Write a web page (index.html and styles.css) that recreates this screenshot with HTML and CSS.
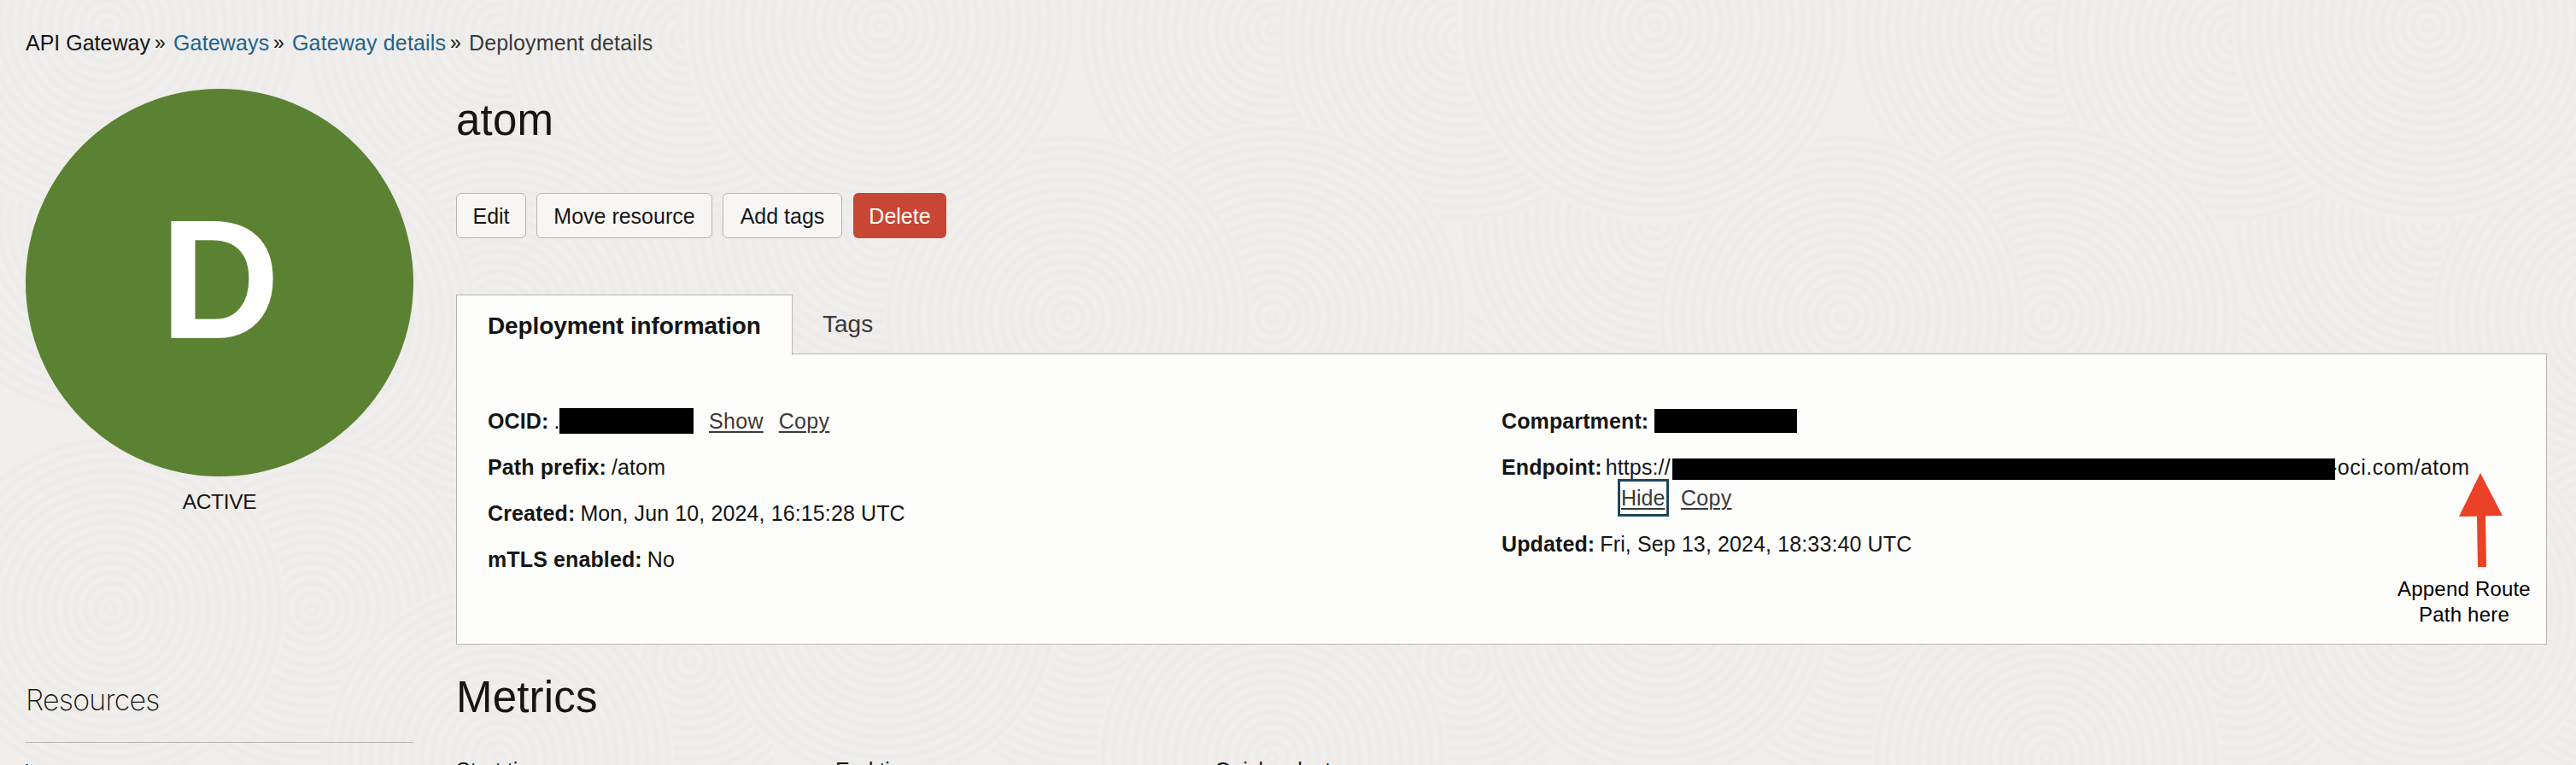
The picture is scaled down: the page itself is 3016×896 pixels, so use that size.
FILE: index.html
```
<!DOCTYPE html>
<html lang="en">
<head>
<meta charset="utf-8">
<title>Deployment details</title>
<link rel="stylesheet" href="styles.css">
</head>
<body>
<svg class="texture" aria-hidden="true" width="3016" height="896">
  <defs>
    <radialGradient id="ring" gradientUnits="userSpaceOnUse" cx="0" cy="0" r="12" spreadMethod="repeat">
      <stop offset="0" stop-color="#f0efed"/><stop offset=".5" stop-color="#ecebe9"/><stop offset="1" stop-color="#f0efed"/>
    </radialGradient>
    <pattern id="swirl" width="906" height="896" patternUnits="userSpaceOnUse">
      <rect width="906" height="896" fill="#efeeec"/>
      <g fill="url(#ring)">
        <circle r="230" transform="translate(700 560)"/>
        <circle r="230" transform="translate(125 262)"/><circle r="230" transform="translate(1031 262)"/>
        <circle r="231" transform="translate(584 35)"/>
        <circle r="215" transform="translate(804 45)"/><circle r="215" transform="translate(-102 45)"/>
        <circle r="228" transform="translate(584 372)"/>
        <circle r="215" transform="translate(344 372)"/>
        <circle r="231" transform="translate(125 30)"/><circle r="231" transform="translate(1031 30)"/>
        <circle r="160" transform="translate(808 775)"/>
        <circle r="200" transform="translate(365 713)"/>
        <circle r="205" transform="translate(584 888)"/>
        <circle r="205" transform="translate(130 713)"/><circle r="205" transform="translate(1036 713)"/>
      </g>
    </pattern>
  </defs>
  <rect width="3016" height="896" fill="url(#swirl)"/>
</svg>

<div class="page">
  <nav class="crumbs">
    <span class="crumb crumb-root">API Gateway</span><span class="sep">»</span>
    <a class="crumb crumb-list">Gateways</a><span class="sep">»</span>
    <a class="crumb crumb-gw">Gateway details</a><span class="sep">»</span>
    <span class="crumb crumb-here">Deployment details</span>
  </nav>
  <div class="columns">
    <aside class="side">
      <div class="badge"><span class="badge-letter">D</span></div>
      <div class="state">ACTIVE</div>
      <h2 class="side-title">Resources</h2>
      <div class="side-marker"></div>
    </aside>
    <main class="main">
      <h1 class="title">atom</h1>
      <div class="actions">
        <button class="btn btn-edit">Edit</button>
        <button class="btn btn-move">Move resource</button>
        <button class="btn btn-tags">Add tags</button>
        <button class="btn btn-delete">Delete</button>
      </div>
      <div class="tabs">
        <div class="tab tab-active"><span>Deployment information</span></div>
        <div class="tab tab-plain"><span>Tags</span></div>
      </div>
      <section class="panel">
        <div class="col">
          <div class="row"><span class="lead lead-ocid"><b>OCID:</b>.</span><i class="redact redact-ocid"></i><a class="link show">Show</a><a class="link copy">Copy</a></div>
          <div class="row"><b>Path prefix:</b><span>/atom</span></div>
          <div class="row"><b>Created:</b><span>Mon, Jun 10, 2024, 16:15:28 UTC</span></div>
          <div class="row"><b>mTLS enabled:</b><span>No</span></div>
        </div>
        <div class="col">
          <div class="row"><span class="lead lead-comp"><b>Compartment:</b></span><i class="redact redact-comp"></i></div>
          <div class="row row-endpoint"><span class="lead lead-url"><b>Endpoint:</b>https://</span><i class="redact redact-url"></i><span class="host">-oci.com/atom</span></div>
          <div class="row row-links"><a class="link hide">Hide</a><a class="link copy2">Copy</a></div>
          <div class="row"><b>Updated:</b><span>Fri, Sep 13, 2024, 18:33:40 UTC</span></div>
        </div>
        <div class="note">
          <svg class="arrow" width="52" height="112" viewBox="0 0 52 112"><path d="M25 1 51 51 31 51.300 32 111 22 111 21 51.700 0 52Z" fill="#eb4126"/></svg>
          <p class="note-text">Append Route<br>Path here</p>
        </div>
      </section>
      <h2 class="metrics">Metrics</h2>
      <div class="filters"><span>Start time</span><span>End time</span><span>Quick selects</span></div>
    </main>
  </div>
</div>
</body>
</html>
```
FILE: styles.css
```
* { box-sizing: border-box; }
html, body { margin: 0; height: 896px; overflow: hidden; }
body {
  position: relative;
  background: #efeeec;
  color: #161513;
  font: 25px/36px "Liberation Sans", Arial, sans-serif;
}
.texture { position: absolute; left: 0; top: 0; display: block; }
.page { position: relative; height: 896px; overflow: hidden; padding: 32px 0 0 30px; }

.crumbs { display: flex; height: 36px; white-space: nowrap; letter-spacing: .15px; }
.crumb-root { width: 150px; letter-spacing: 0; }
.crumb-list { width: 116px; }
.crumb-gw { width: 184px; }
.crumbs a { color: #1f628c; }
.crumb-here { color: #3b3936; }
.sep { width: 23px; padding-left: 1px; font-size: 23px; }

.columns { display: flex; margin-top: 35px; }
.side { width: 454px; margin-right: 50px; }
.badge {
  display: flex; align-items: center; justify-content: center;
  width: 454px; height: 454px; margin-top: 1px; border-radius: 50%;
  background: #5b8232; color: #fff; font-size: 198px; font-weight: bold; line-height: 200px;
}
.badge-letter { transform: translate(0, -3px) scaleX(.98); }
.state { margin-top: 12px; font-size: 24.5px; letter-spacing: -.3px; text-align: center; }
.side-title {
  margin: 178px 0 0; height: 86px; border-bottom: 1px solid #b6b4b1; letter-spacing: -.8px;
  font: 200 34px/72px Inter, "Liberation Sans", Arial, sans-serif;
}
.side-marker { width: 3px; height: 40px; margin-top: 25px; background: #1f628c; }

.main { width: 2448px; }
.title { margin: 8px 0 0; font-size: 51px; font-weight: normal; line-height: 60px; letter-spacing: .2px; }
.actions { display: flex; gap: 12px; margin-top: 55px; }
.btn {
  height: 53px; padding: 0; border: 1px solid #b6b4b1; border-radius: 6px;
  background: #f7f6f5; color: #161513; font: inherit; white-space: nowrap;
}
.btn-edit { width: 82px; }
.btn-move { width: 206px; }
.btn-tags { width: 140px; }
.btn-delete { width: 109px; margin-left: 1px; border: 0; background: #c74634; color: #fff; }

.tabs { display: flex; height: 69px; margin-top: 66px; position: relative; }
.tab { font-size: 28px; white-space: nowrap; }
.tab-active {
  width: 394px; height: 71px; padding: 18px 0 0 36px; letter-spacing: -.1px;
  border: 1px solid #bbb5b2; border-bottom: 0; background: #fdfdfc; font-weight: bold; z-index: 1;
}
.tab-plain { padding: 17px 0 0 35px; color: #3b3936; }
.panel {
  position: relative; display: flex; height: 341px; padding: 60px 0 0 36px;
  border: 1px solid #bbb5b2; background: #fdfdfc; letter-spacing: .12px;
}
.col { width: 1187px; }
.row { display: flex; height: 36px; margin-bottom: 18px; white-space: nowrap; }
.row b { margin-right: 6px; }
.lead { flex: none; }
.lead-ocid { width: 84px; }
.lead-comp { width: 179px; }
.lead-url { width: 200px; }
.lead-url b { margin-right: 4px; }
.redact { display: block; flex: none; background: #000; z-index: 1; }
.redact-ocid { width: 157px; height: 30px; margin-top: 3px; }
.redact-comp { width: 167px; height: 28px; margin-top: 4px; }
.redact-url { width: 776px; height: 25px; margin-top: 8px; }
.link { color: #3b3936; text-decoration: underline; text-decoration-thickness: 2px; text-underline-offset: 3px; }
.show { margin-left: 18px; letter-spacing: .3px; }
.copy { margin-left: 18px; letter-spacing: .3px; }
.row-endpoint { margin-bottom: 0; }
.host { margin-left: -6px; letter-spacing: .5px; }
.hide { width: 60px; height: 44px; margin: -4px 0 0 136px; padding: 1px 0 0 1px; border: 3px solid #1f455e; letter-spacing: 0; }
.copy2 { margin-left: 14px; letter-spacing: .3px; }
.note { position: absolute; right: 14px; top: 138px; width: 164px; }
.arrow { display: block; margin-left: 76px; }
.note-text { margin: 10px 0 0; color: #000; font-size: 24px; line-height: 30px; letter-spacing: .2px; text-align: center; }
.metrics { margin: 32px 0 0; font-size: 51px; font-weight: normal; line-height: 60px; letter-spacing: .2px; }
.filters { display: flex; margin-top: 37px; }
.filters span { width: 444px; }
```
